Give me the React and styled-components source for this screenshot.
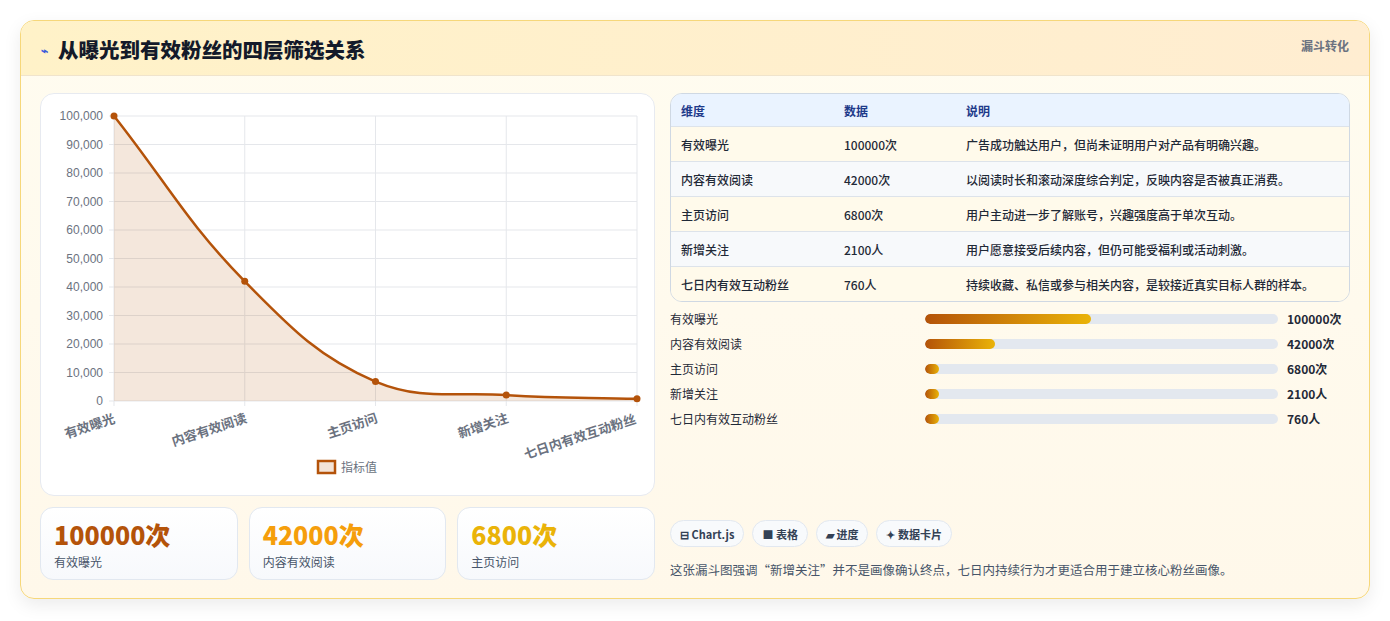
import React from "react";
import styled, { createGlobalStyle } from "styled-components";

const Global = createGlobalStyle`
  body{margin:0;background:#fff;font-family:"Noto Sans CJK SC","Noto Sans",sans-serif;}
`;
const Page = styled.div`padding:20px 20px 22px 20px;`;
const Card = styled.div`
  border:1px solid #f6d77a;border-radius:14px;overflow:hidden;
  background:linear-gradient(180deg,#fffcf0,#fff8ea);
  box-shadow:0 6px 18px rgba(0,0,0,0.08);
`;
const Header = styled.div`
  height:54px;display:flex;justify-content:space-between;align-items:flex-start;
  padding:0 20px;background:linear-gradient(90deg,#fff2c8,#ffedd1);
  border-bottom:1px solid #f0e4cc;
`;
const Title = styled.h2`
  margin:0;margin-top:13px;font-size:20.5px;font-weight:800;color:#141a2a;display:flex;align-items:center;gap:10px;
  span{font-size:12px;color:#3b5bdb;}
`;
const Tag = styled.div`margin-top:16px;font-size:12px;font-weight:700;color:#6b7280;`;
const Body = styled.div`display:grid;grid-template-columns:615px 1fr;gap:15px;padding:17px 19px 18px 19px;`;
const Col = styled.div`display:flex;flex-direction:column;`;
const ChartBox = styled.div`
  height:403px;background:#fff;border:1px solid #e7eaf0;border-radius:14px;box-sizing:border-box;
`;
const Stats = styled.div`display:grid;grid-template-columns:repeat(3,1fr);gap:11px;margin-top:11px;`;
const Stat = styled.div`
  height:73px;box-sizing:border-box;border:1px solid #e2e8f0;border-radius:13px;
  background:linear-gradient(180deg,#fff,#f7f9fc);padding:10px 13px;
`;
const StatVal = styled.div`font-size:25px;font-weight:800;line-height:32px;color:${p=>p.c};`;
const StatLbl = styled.div`font-size:12px;color:#475569;margin-top:3px;`;
const Table = styled.div`border:1px solid #cfd8e3;border-radius:12px;overflow:hidden;`;
const Row = styled.div`
  display:grid;grid-template-columns:163px 122px 1fr;height:${p=>p.h?32:34}px;align-items:center;
  padding:0 10px;font-size:12px;
  color:${p=>p.h?"#1e3a8a":"#1f2937"};font-weight:${p=>p.h?600:500};
  background:${p=>p.h?"#eaf3ff":p.alt?"#f7f9fb":"#fffaeb"};
  border-top:${p=>p.h?"none":"1px solid #dde3ea"};
`;
const Bars = styled.div`display:flex;flex-direction:column;gap:8px;margin-top:8px;`;
const BarRow = styled.div`display:grid;grid-template-columns:255px 362px 1fr;align-items:center;height:17px;font-size:12px;color:#1f2937;`;
const Track = styled.div`height:10px;border-radius:5px;background:#e3e8ef;overflow:hidden;margin-right:9px;`;
const Fill = styled.div`height:100%;border-radius:5px;background:linear-gradient(90deg,#b45309,#eab308);`;
const Val = styled.span`font-weight:700;`;
const Chips = styled.div`display:flex;gap:8px;margin-top:auto;`;
const Chip = styled.div`
  height:27px;box-sizing:border-box;padding:0 9px;border:1px solid #e2e8f0;border-radius:14px;background:#f8fafc;
  display:flex;align-items:center;font-size:11px;font-weight:600;color:#334155;gap:3px;
`;
const Note = styled.div`font-size:12.5px;color:#475569;margin-top:13px;margin-bottom:1px;`;

const vals=[100000,42000,6800,2100,760];
const labels=["有效曝光","内容有效阅读","主页访问","新增关注","七日内有效互动粉丝"];
const units=["100000次","42000次","6800次","2100人","760人"];
const X0=73,X1=596,Y0=22,Y1=307;
const pts=vals.map((v,i)=>[X0+(X1-X0)*i/4,Y1-(Y1-Y0)*v/100000]);
function path(){
  const t=0.4;let d=`M${pts[0][0]},${pts[0][1]}`;
  const cp=pts.map((p,i)=>{
    const a=pts[Math.max(0,i-1)],c=pts[Math.min(pts.length-1,i+1)];
    const d01=Math.hypot(p[0]-a[0],p[1]-a[1]),d12=Math.hypot(c[0]-p[0],c[1]-p[1]);
    const fa=t*d01/(d01+d12||1),fb=t*d12/(d01+d12||1);
    return {prev:[p[0]-fa*(c[0]-a[0]),Math.min(Y1,p[1]-fa*(c[1]-a[1]))],next:[p[0]+fb*(c[0]-a[0]),Math.min(Y1,p[1]+fb*(c[1]-a[1]))]};
  });
  for(let i=1;i<pts.length;i++){d+=` C${cp[i-1].next[0]},${cp[i-1].next[1]} ${cp[i].prev[0]},${cp[i].prev[1]} ${pts[i][0]},${pts[i][1]}`;}
  return d;
}
function Chart(){
  const d=path();
  return(
    <svg width="615" height="403" viewBox="0 0 615 403" style={{display:"block"}}>
      {Array.from({length:11},(_,i)=>{const y=Y0+(Y1-Y0)*i/10;return(
        <g key={i}><line x1={X0-5} x2={X1} y1={y} y2={y} stroke="#e5e7eb"/>
        <text x={62} y={y+4} textAnchor="end" fontSize="12" fill="#6b7280" fontFamily="Liberation Sans">{(100000-i*10000).toLocaleString("en-US")}</text></g>);})}
      {pts.map((p,i)=><line key={i} x1={p[0]} x2={p[0]} y1={Y0} y2={Y1+5} stroke="#e5e7eb"/>)}
      <path d={`${d} L${X1},${Y1} L${X0},${Y1} Z`} fill="rgba(180,83,9,0.14)"/>
      <path d={d} fill="none" stroke="#b4530a" strokeWidth="2.5"/>
      {pts.map((p,i)=><circle key={i} cx={p[0]} cy={p[1]} r="3.5" fill="#b4530a"/>)}
      {pts.map((p,i)=><text key={i} x={p[0]} y={Y1+22} textAnchor="end" fontSize="13" fontWeight="600" fill="#6b7280" transform={`rotate(-18 ${p[0]} ${Y1+22})`} dx={i===0?2:i===4?0:3}>{labels[i]}</text>)}
      <rect x="277" y="367" width="17" height="12" fill="#f3e4d8" stroke="#b4530a" strokeWidth="2.5"/>
      <text x="300" y="378" fontSize="12" fill="#6b7280">指标值</text>
    </svg>
  );
}
export default function App(){
  const rows=[["有效曝光","100000次","广告成功触达用户，但尚未证明用户对产品有明确兴趣。"],["内容有效阅读","42000次","以阅读时长和滚动深度综合判定，反映内容是否被真正消费。"],["主页访问","6800次","用户主动进一步了解账号，兴趣强度高于单次互动。"],["新增关注","2100人","用户愿意接受后续内容，但仍可能受福利或活动刺激。"],["七日内有效互动粉丝","760人","持续收藏、私信或参与相关内容，是较接近真实目标人群的样本。"]];
  return(<><Global/><Page><Card>
    <Header><Title><span>⌁</span>从曝光到有效粉丝的四层筛选关系</Title><Tag>漏斗转化</Tag></Header>
    <Body>
      <Col>
        <ChartBox><Chart/></ChartBox>
        <Stats>
          <Stat><StatVal c="#b45309">100000次</StatVal><StatLbl>有效曝光</StatLbl></Stat>
          <Stat><StatVal c="#f59e0b">42000次</StatVal><StatLbl>内容有效阅读</StatLbl></Stat>
          <Stat><StatVal c="#eab308">6800次</StatVal><StatLbl>主页访问</StatLbl></Stat>
        </Stats>
      </Col>
      <Col>
        <Table>
          <Row h><span>维度</span><span>数据</span><span>说明</span></Row>
          {rows.map((r,i)=><Row key={i} alt={i%2===1}><span>{r[0]}</span><span>{r[1]}</span><span>{r[2]}</span></Row>)}
        </Table>
        <Bars>
          {vals.map((v,i)=><BarRow key={i}><span>{labels[i]}</span><Track><Fill style={{width:`${Math.max(4,v/100000*47)}%`}}/></Track><Val>{units[i]}</Val></BarRow>)}
        </Bars>
        <Chips><Chip>⊟ Chart.js</Chip><Chip>■ 表格</Chip><Chip>▰ 进度</Chip><Chip>✦ 数据卡片</Chip></Chips>
        <Note>这张漏斗图强调“新增关注”并不是画像确认终点，七日内持续行为才更适合用于建立核心粉丝画像。</Note>
      </Col>
    </Body>
  </Card></Page></>);
}
